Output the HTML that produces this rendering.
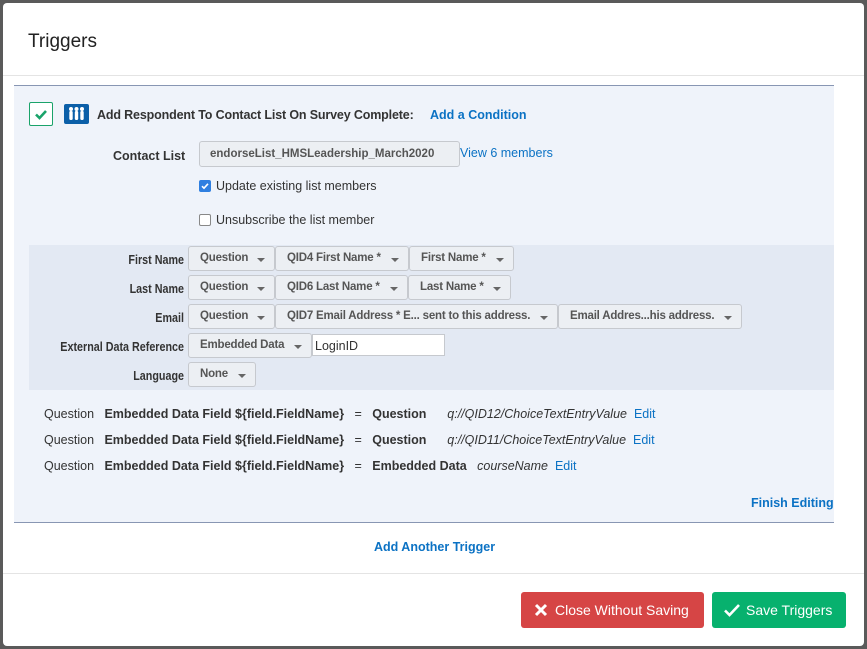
<!DOCTYPE html>
<html><head><style>
*{box-sizing:border-box;margin:0;padding:0}
body{width:867px;height:649px;background:#5a5a5a;font-family:"Liberation Sans",sans-serif;position:relative;overflow:hidden;color:#333}
.modal{position:absolute;left:3px;top:3px;width:861px;height:643px;background:#fff;border-radius:4px}
.a{position:absolute;white-space:nowrap}
.dd{position:absolute;height:25px;border:1px solid #c6c9ce;border-radius:3px;background:#eceff3;font-size:11.5px;font-weight:bold;color:#555;padding:5px 0 0 11px;white-space:nowrap;letter-spacing:-0.2px}
.dd:after{content:"";position:absolute;right:9px;top:11px;border-left:4px solid transparent;border-right:4px solid transparent;border-top:4px solid #666}
.lbl{position:absolute;font-size:12.5px;font-weight:bold;color:#333;text-align:right;width:181px;left:0;transform:scaleX(0.86);transform-origin:right}
.link{color:#0b72c4;font-weight:bold}
.row{position:absolute;left:44px;font-size:12.5px;color:#333;white-space:nowrap}
</style></head><body>
<div class="modal">
<div class="a" style="left:25px;top:28px;font-size:19px;color:#222">Triggers</div>
<div class="a" style="left:0;top:72px;width:861px;height:1px;background:#e4e4e4"></div>
<div class="a" style="left:11px;top:82px;width:820px;height:438px;background:#eff3fa;border-top:1px solid #8896b3;border-bottom:1px solid #8896b3"></div>
<div class="a" style="left:26px;top:99px;width:24px;height:24px;border:1px solid #1aa36a;border-radius:2px;background:#fff"></div>
<svg class="a" style="left:30px;top:103px" width="16" height="16"><path d="M3 8.5l3.5 3.5L13 5" stroke="#1aa36a" stroke-width="2.6" fill="none"/></svg>
<div class="a" style="left:61px;top:101px;width:25px;height:20px;background:#0b5fa8;border-radius:2px"></div>
<svg class="a" style="left:61px;top:101px" width="25" height="20"><g fill="#fff"><circle cx="7" cy="5" r="2"/><rect x="5.3" y="7" width="3.4" height="9" rx="1.2"/><circle cx="12.5" cy="5" r="2"/><rect x="10.8" y="7" width="3.4" height="9" rx="1.2"/><circle cx="18" cy="5" r="2"/><rect x="16.3" y="7" width="3.4" height="9" rx="1.2"/></g></svg>
<div class="a" style="left:94px;top:105px;font-size:12.5px;font-weight:bold;color:#333;letter-spacing:-0.15px">Add Respondent To Contact List On Survey Complete:</div>
<div class="a link" style="left:427px;top:105px;font-size:12.5px">Add a Condition</div>
<div class="a" style="left:110px;top:146px;font-size:12.5px;font-weight:bold">Contact List</div>
<div class="a" style="left:196px;top:138px;width:261px;height:26px;border:1px solid #c6c9ce;border-radius:3px;background:#eceff3;font-size:11.5px;font-weight:bold;color:#555;padding:6px 0 0 10px">endorseList_HMSLeadership_March2020</div>
<div class="a" style="left:457px;top:143px;font-size:12.5px;color:#0b72c4">View 6 members</div>
<div class="a" style="left:196px;top:177px;width:12px;height:12px;background:#2f7fe0;border-radius:2px"></div>
<svg class="a" style="left:196px;top:177px" width="12" height="12"><path d="M3 6.2l2 2L9 3.8" stroke="#fff" stroke-width="1.6" fill="none"/></svg>
<div class="a" style="left:213px;top:176px;font-size:12.5px">Update existing list members</div>
<div class="a" style="left:196px;top:211px;width:12px;height:12px;background:#fff;border:1px solid #888;border-radius:2px"></div>
<div class="a" style="left:213px;top:210px;font-size:12.5px">Unsubscribe the list member</div>
<div class="a" style="left:26px;top:242px;width:805px;height:145px;background:#e3e9f3"></div>
<div class="lbl" style="top:250px">First Name</div>
<div class="dd" style="left:185px;top:243px;width:87px">Question</div>
<div class="dd" style="left:272px;top:243px;width:134px">QID4 First Name *</div>
<div class="dd" style="left:406px;top:243px;width:105px">First Name *</div>
<div class="lbl" style="top:279px">Last Name</div>
<div class="dd" style="left:185px;top:272px;width:87px">Question</div>
<div class="dd" style="left:272px;top:272px;width:133px">QID6 Last Name *</div>
<div class="dd" style="left:405px;top:272px;width:103px">Last Name *</div>
<div class="lbl" style="top:308px">Email</div>
<div class="dd" style="left:185px;top:301px;width:87px">Question</div>
<div class="dd" style="left:272px;top:301px;width:283px">QID7 Email Address * E... sent to this address.</div>
<div class="dd" style="left:555px;top:301px;width:184px">Email Addres...his address.</div>
<div class="lbl" style="top:337px">External Data Reference</div>
<div class="dd" style="left:185px;top:330px;width:124px">Embedded Data</div>
<div class="a" style="left:309px;top:331px;width:133px;height:22px;background:#fff;border:1px solid #c6c9ce;font-size:12.5px;padding:4px 0 0 2px">LoginID</div>
<div class="lbl" style="top:366px">Language</div>
<div class="dd" style="left:185px;top:359px;width:68px">None</div>
<div class="row" style="top:404px;left:41px">Question&nbsp;&nbsp; <b>Embedded Data Field ${field.FieldName}</b>&nbsp;&nbsp; = &nbsp;&nbsp;<b>Question</b>&nbsp;&nbsp;&nbsp;&nbsp;&nbsp; <i>q://QID12/ChoiceTextEntryValue</i>&nbsp; <span style="color:#0b72c4">Edit</span></div>
<div class="row" style="top:430px;left:41px">Question&nbsp;&nbsp; <b>Embedded Data Field ${field.FieldName}</b>&nbsp;&nbsp; = &nbsp;&nbsp;<b>Question</b>&nbsp;&nbsp;&nbsp;&nbsp;&nbsp; <i>q://QID11/ChoiceTextEntryValue</i>&nbsp; <span style="color:#0b72c4">Edit</span></div>
<div class="row" style="top:456px;left:41px">Question&nbsp;&nbsp; <b>Embedded Data Field ${field.FieldName}</b>&nbsp;&nbsp; = &nbsp;&nbsp;<b>Embedded Data</b>&nbsp;&nbsp; <i>courseName</i>&nbsp; <span style="color:#0b72c4">Edit</span></div>
<div class="a link" style="left:748px;top:493px;font-size:12.5px">Finish Editing</div>
<div class="a link" style="left:371px;top:537px;font-size:12.5px">Add Another Trigger</div>
<div class="a" style="left:0;top:570px;width:861px;height:1px;background:#e4e4e4"></div>
<div class="a" style="left:518px;top:589px;width:183px;height:36px;background:#d64545;border-radius:3px;color:#fff;font-size:14px;padding:10px 0 0 34px">Close Without Saving</div>
<svg class="a" style="left:531px;top:600px" width="14" height="14"><path d="M2 2l10 10M12 2L2 12" stroke="#fff" stroke-width="3"/></svg>
<div class="a" style="left:709px;top:589px;width:134px;height:36px;background:#07b16e;border-radius:3px;color:#fff;font-size:14px;padding:10px 0 0 34px">Save Triggers</div>
<svg class="a" style="left:720px;top:599px" width="18" height="16"><path d="M2 8.5l4.5 4.5L16 3" stroke="#fff" stroke-width="2.6" fill="none"/></svg>
</div>
</body></html>
